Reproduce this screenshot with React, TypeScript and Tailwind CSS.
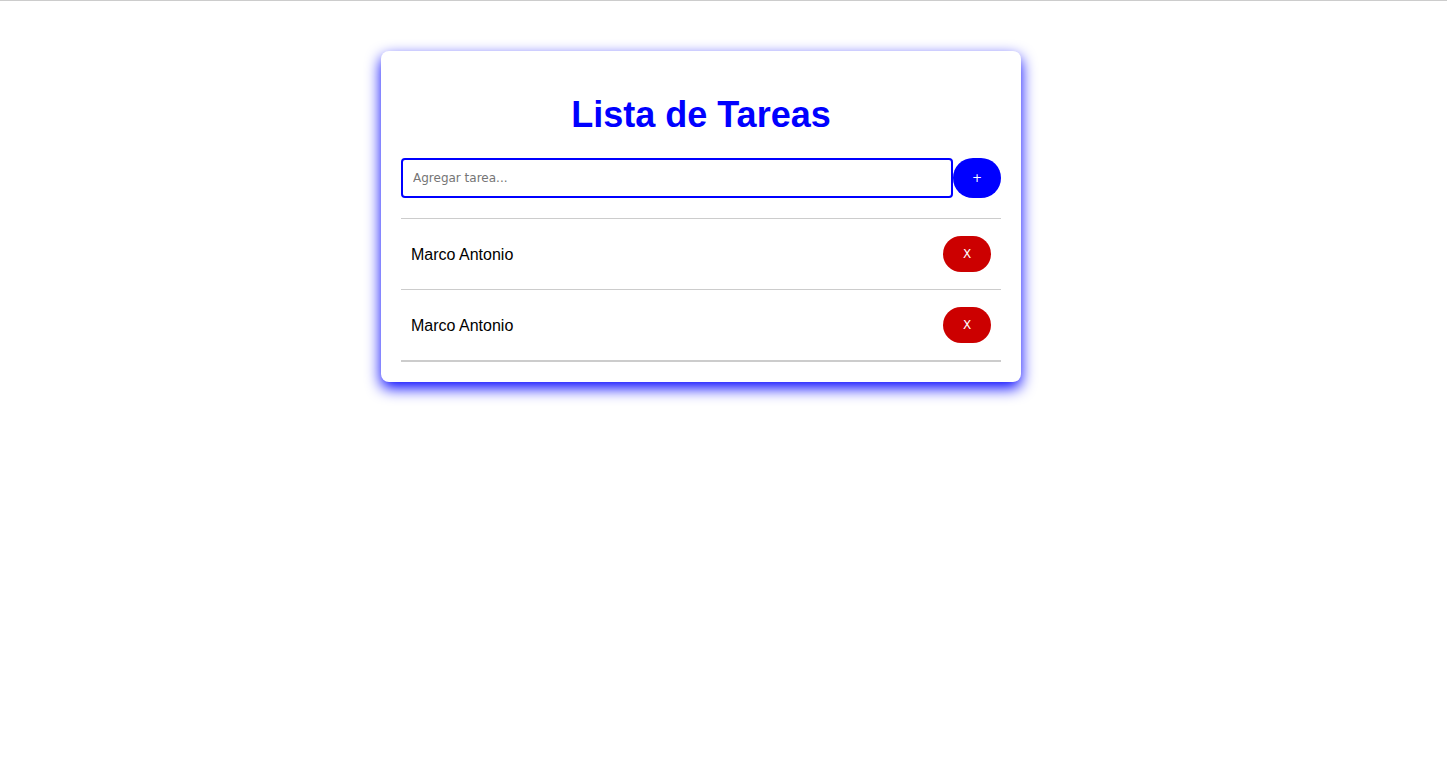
import React, { useState } from 'react';

type Task = { id: number; text: string };

export default function App() {
  const [tasks, setTasks] = useState<Task[]>([
    { id: 1, text: 'Marco Antonio' },
    { id: 2, text: 'Marco Antonio' },
  ]);
  const [value, setValue] = useState('');

  const addTask = () => {
    if (!value.trim()) return;
    setTasks([...tasks, { id: Date.now(), text: value.trim() }]);
    setValue('');
  };

  const removeTask = (id: number) => setTasks(tasks.filter(t => t.id !== id));

  return (
    <div className="min-h-screen bg-white border-t border-[#cccccc] font-['DejaVu_Sans',sans-serif]">
      <div className="w-[1402px] pt-[50px]">
        {/* Card */}
        <div className="mx-auto w-[640px] bg-white rounded-lg p-5 shadow-[0_6px_15px_#0000ff]">
          <h1 className="my-[23.5px] text-center text-[36px] leading-[40px] font-bold text-[#0000ff] font-['Liberation_Sans',Arial,sans-serif]">
            Lista de Tareas
          </h1>

          <div className="flex">
            <input
              type="text"
              value={value}
              onChange={e => setValue(e.target.value)}
              onKeyDown={e => e.key === 'Enter' && addTask()}
              placeholder="Agregar tarea..."
              className="flex-1 h-10 px-[10px] border-2 border-[#0000ff] rounded text-[12px] text-black placeholder:text-[#757575] outline-none"
            />
            <button
              type="button"
              onClick={addTask}
              className="w-12 h-10 rounded-full bg-[#0000ff] text-white text-[12px]"
            >
              +
            </button>
          </div>

          <ul className="mt-5 border-t border-b border-[#cccccc]">
            {tasks.map(task => (
              <li
                key={task.id}
                className="flex items-center justify-between px-[10px] py-[17px] border-b border-[#cccccc]"
              >
                <span className="pt-0.5 text-base text-black font-['Liberation_Sans',Arial,sans-serif]">{task.text}</span>
                <button
                  type="button"
                  onClick={() => removeTask(task.id)}
                  className="w-12 h-9 rounded-full bg-[#cc0000] text-white text-[12px]"
                >
                  X
                </button>
              </li>
            ))}
          </ul>
        </div>
      </div>
    </div>
  );
}
